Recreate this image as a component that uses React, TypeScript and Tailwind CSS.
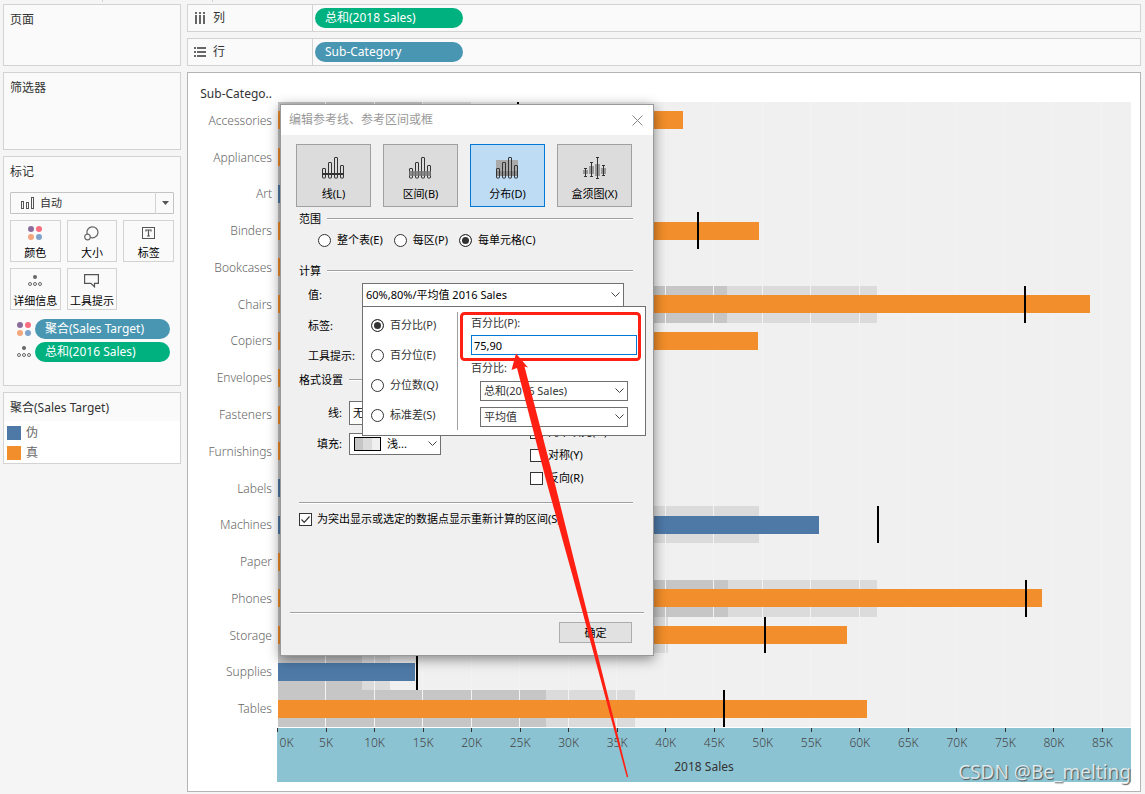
import React from 'react';

const MAX_K = 88;

interface Row {
  name: string;
  sales: number;
  target: number;
  met: boolean;
}

const rows: Row[] = [
  { name: 'Accessories', sales: 41.8, target: 24.9, met: true },
  { name: 'Appliances', sales: 30.2, target: 24, met: true },
  { name: 'Art', sales: 6.2, target: 8, met: false },
  { name: 'Binders', sales: 49.65, target: 43.4, met: true },
  { name: 'Bookcases', sales: 30, target: 26, met: true },
  { name: 'Chairs', sales: 83.8, target: 77.2, met: true },
  { name: 'Copiers', sales: 49.55, target: 30, met: true },
  { name: 'Envelopes', sales: 4.7, target: 4, met: true },
  { name: 'Fasteners', sales: 1.5, target: 1, met: true },
  { name: 'Furnishings', sales: 27.8, target: 21, met: true },
  { name: 'Labels', sales: 2.8, target: 3, met: false },
  { name: 'Machines', sales: 55.85, target: 62, met: false },
  { name: 'Paper', sales: 27.7, target: 20, met: true },
  { name: 'Phones', sales: 78.85, target: 77.3, met: true },
  { name: 'Storage', sales: 58.7, target: 50.3, met: true },
  { name: 'Supplies', sales: 14.15, target: 14.4, met: false },
  { name: 'Tables', sales: 60.8, target: 46.1, met: true },
];

const ticks = Array.from({ length: 18 }, (_, i) => i * 5);

const pct = (k: number) => `${(k / MAX_K) * 100}%`;

/* ---------- icons ---------- */

const ColorDots = () => (
  <svg width="14" height="14" viewBox="0 0 14 14">
    <circle cx="3" cy="3" r="3" fill="#8a6d9b" />
    <circle cx="11" cy="3" r="3" fill="#fa6e80" />
    <circle cx="3" cy="11" r="3" fill="#f4a77c" />
    <circle cx="11" cy="11" r="3" fill="#7fa3ca" />
  </svg>
);

const DetailDots = () => (
  <svg width="14" height="12" viewBox="0 0 14 12" fill="none" stroke="#666">
    <circle cx="7" cy="2" r="2" fill="#666" stroke="none" />
    <circle cx="2" cy="9" r="1.5" />
    <circle cx="7" cy="9" r="1.5" />
    <circle cx="12" cy="9" r="1.5" />
  </svg>
);

const SizeIcon = () => (
  <svg width="15" height="15" viewBox="0 0 15 15" fill="none" stroke="#666" strokeWidth="1.2">
    <path d="M3.3 8.2A5.5 5.5 0 1 1 6.4 11.4" />
    <circle cx="3.5" cy="11" r="2.8" />
  </svg>
);

const LabelIcon = () => (
  <svg width="14" height="12" viewBox="0 0 14 12" fill="none" stroke="#555">
    <rect x="0.5" y="0.5" width="12" height="11" />
    <path d="M4 4.5V3h5v1.5M6.5 3v6M5 9h3" strokeWidth="1.2" />
  </svg>
);

const TooltipIcon = () => (
  <svg width="15" height="14" viewBox="0 0 15 14" fill="none" stroke="#555" strokeWidth="1.2">
    <path d="M0.6 0.6h13.8v8.8h-3.9v3.4l-3.6-3.4H0.6z" />
  </svg>
);

const Chevron = () => (
  <svg className="pointer-events-none absolute right-1 top-1/2 -translate-y-1/2" width="9" height="6" viewBox="0 0 9 6" fill="none" stroke="#444">
    <path d="M0.5 0.5l4 4 4-4" />
  </svg>
);

const BARS = [
  { x: 0, y: 11 },
  { x: 6, y: 5 },
  { x: 12, y: 0 },
  { x: 18, y: 8 },
];

function RefIcon({ kind }: { kind: string }) {
  if (kind === 'box') {
    const boxes = [
      { x: 2.5, top: 11, bottom: 19, b1: 13, b2: 17 },
      { x: 8.5, top: 5, bottom: 19, b1: 9, b2: 17 },
      { x: 14.5, top: 0, bottom: 21, b1: 7, b2: 19 },
      { x: 20.5, top: 8, bottom: 18, b1: 11, b2: 17 },
    ];
    return (
      <svg width="24" height="22" viewBox="0 0 24 22">
        {boxes.map((b) => (
          <g key={b.x}>
            <rect x={b.x - 2.5} y={b.b1} width="5" height={b.b2 - b.b1} fill="#999" />
            <path d={`M${b.x} ${b.top}V${b.bottom + 0.5}M${b.x - 1.5} ${b.top + 0.5}h3M${b.x - 1.5} ${b.bottom + 0.5}h3`} stroke="#333" fill="none" />
          </g>
        ))}
      </svg>
    );
  }
  return (
    <svg width="23" height="22" viewBox="0 0 23 22">
      {kind === 'dist' && <rect x="0" y="3" width="22" height="11" fill="#aaa" />}
      {kind === 'dist' && <rect x="0" y="14" width="22" height="5" fill="#8c8c8c" />}
      {BARS.map((b) => (
        <rect key={b.x} x={b.x + 0.5} y={b.y + 0.5} width="3" height={20.5 - b.y} rx="0.5" fill="none" stroke="#333" />
      ))}
      {kind === 'line' && <rect x="0" y="16" width="22" height="2" fill="#333" />}
      {kind === 'band' && <rect x="0" y="14" width="22" height="5" fill="#777" fillOpacity="0.8" />}
    </svg>
  );
}

/* ---------- small controls ---------- */

function Pill({ color, children }: { color: 'green' | 'blue'; children: React.ReactNode }) {
  return (
    <button
      className={`h-5 w-full rounded-full pl-[10px] text-left text-[12px] leading-5 text-white ${
        color === 'green' ? 'bg-[#00b180]' : 'bg-[#4996b2]'
      }`}
    >
      {children}
    </button>
  );
}

function Radio({ name, label, checked, className = 'text-black' }: { name: string; label: string; checked?: boolean; className?: string }) {
  return (
    <label className={`flex h-4 items-center gap-[6px] ${className}`}>
      <input
        type="radio"
        name={name}
        defaultChecked={checked}
        className="size-[13px] appearance-none rounded-full border border-[#333] bg-white checked:bg-[#333] checked:shadow-[inset_0_0_0_2px_#fff]"
      />
      {label}
    </label>
  );
}

function Check({ label, checked }: { label: string; checked?: boolean }) {
  return (
    <label className="flex h-4 items-center gap-[5px] whitespace-nowrap">
      <span className="relative flex size-[13px] shrink-0">
        <input type="checkbox" defaultChecked={checked} className="peer size-[13px] appearance-none border border-[#333] bg-white" />
        <svg className="pointer-events-none absolute inset-0 hidden peer-checked:block" width="13" height="13" viewBox="0 0 13 13" fill="none" stroke="#333" strokeWidth="1.2">
          <path d="M2.5 6.5l2.7 2.8 5.3-5.8" />
        </svg>
      </span>
      {label}
    </label>
  );
}

function Select({ label, value, id, className = '', color = 'text-black', pad = 'pl-[3px]' }: { label?: string; value: string; id: string; className?: string; color?: string; pad?: string }) {
  return (
    <div className={`relative ${className}`}>
      <select id={id} aria-label={label} className={`size-full appearance-none border border-[#707070] bg-white ${pad} ${color}`}>
        <option>{value}</option>
      </select>
      <Chevron />
    </div>
  );
}

const Rule = ({ className = '' }: { className?: string }) => <div className={`h-[2px] border-t border-[#a0a0a0] bg-white ${className}`} />;

function SectionTitle({ children, className }: { children: React.ReactNode; className: string }) {
  return (
    <div className={`ml-[3px] mr-[5px] flex h-4 items-center gap-[6px] ${className}`}>
      <span>{children}</span>
      <Rule className="flex-1" />
    </div>
  );
}

/* ---------- left side ---------- */

const markButtons = [
  { label: '颜色', icon: <ColorDots /> },
  { label: '大小', icon: <SizeIcon /> },
  { label: '标签', icon: <LabelIcon /> },
  { label: '详细信息', icon: <DetailDots /> },
  { label: '工具提示', icon: <TooltipIcon /> },
];

function Sidebar() {
  return (
    <aside className="flex w-[178px] shrink-0 flex-col gap-[6px] text-[12px] leading-4 text-[#333]">
      <section className="h-[62px] border border-[#d3d3d3] bg-[#fafafa] px-[6px] py-[7px]">页面</section>
      <section className="h-[78px] border border-[#d3d3d3] bg-[#fafafa] px-[6px] py-[7px]">筛选器</section>
      <section className="h-[230px] border border-[#d3d3d3] bg-[#fafafa] px-[6px] py-[7px]">
        <h2>标记</h2>
        <div className="relative mt-3 h-[22px]">
          <svg className="absolute left-[11px] top-[5px]" width="14" height="12" viewBox="0 0 14 12" fill="none" stroke="#555">
            <rect x="0.5" y="4.5" width="2" height="7" />
            <rect x="5.5" y="5.5" width="2" height="6" />
            <rect x="10.5" y="0.5" width="2" height="11" />
          </svg>
          <select aria-label="标记类型" className="size-full appearance-none rounded-[1px] border border-[#c4c4c4] pl-[29px] text-[11px]">
            <option>自动</option>
          </select>
          <div className="pointer-events-none absolute inset-y-0 right-0 flex w-[19px] items-center justify-center border-l border-[#d3d3d3]">
            <svg width="7" height="4" viewBox="0 0 7 4" fill="#555">
              <path d="M0 0h7L3.5 4z" />
            </svg>
          </div>
        </div>
        <div className="mt-[6px] grid grid-cols-3 gap-[6px] text-[11px] text-black">
          {markButtons.map((b) => (
            <button key={b.label} className="flex h-[42px] flex-col items-center whitespace-nowrap border border-[#d3d3d3] pt-1">
              <span className="flex h-4 items-center">{b.icon}</span>
              <span className="mt-1">{b.label}</span>
            </button>
          ))}
        </div>
        <div className="mt-[9px] flex flex-col gap-[3px] pl-[7px] pr-1">
          <div className="flex items-center gap-1">
            <span className="shrink-0">
              <ColorDots />
            </span>
            <Pill color="blue">聚合(Sales Target)</Pill>
          </div>
          <div className="flex items-center gap-1">
            <span className="shrink-0">
              <DetailDots />
            </span>
            <Pill color="green">总和(2016 Sales)</Pill>
          </div>
        </div>
      </section>
      <section className="h-[72px] border border-[#d3d3d3] bg-white">
        <h2 className="h-7 bg-[#fafafa] pl-[6px] pt-[7px]">聚合(Sales Target)</h2>
        <ul className="flex flex-col gap-1 pl-[3px] pt-1 text-[#666]">
          <li className="flex h-4 items-center gap-[5px]">
            <span className="size-[14px] bg-[#4e79a7]" />伪
          </li>
          <li className="flex h-4 items-center gap-[5px]">
            <span className="size-[14px] bg-[#f28e2b]" />真
          </li>
        </ul>
      </section>
    </aside>
  );
}

/* ---------- shelves + chart ---------- */

function Shelf({ label, icon, children }: { label: string; icon: React.ReactNode; children: React.ReactNode }) {
  return (
    <div className="flex h-7 items-center border border-[#d3d3d3] bg-[#fafafa] text-[12px] text-[#333]">
      <div className="flex h-full w-[125px] shrink-0 items-center gap-[6px] border-r border-[#d3d3d3] pl-[6px]">
        {icon}
        {label}
      </div>
      <div className="ml-[2px] w-[148px]">{children}</div>
    </div>
  );
}

function Chart() {
  return (
    <section className="flex min-h-0 flex-1 flex-col border border-[#b4b4b4] bg-white pb-[9px] pr-[9px] pt-[13px] text-[12px] leading-4">
      <div className="h-4 w-[84px] text-right text-[#333]">Sub-Catego..</div>
      <div className="relative flex min-h-0 flex-1 flex-col">
        {rows.map((r) => (
          <div key={r.name} className="flex min-h-0 flex-1">
            <div className="flex w-[90px] shrink-0 items-center justify-end pr-[6px] pt-px font-light text-[#666]">{r.name}</div>
            <div className="relative flex flex-1 items-center bg-[#f0f0f0]">
              <div className="absolute inset-y-0 left-0 bg-[#dbdbdb]" style={{ width: pct(r.target * 0.8) }} />
              <div className="absolute inset-y-0 left-0 bg-[#c6c6c6]" style={{ width: pct(r.target * 0.6) }} />
              {ticks.slice(1).map((t) => (
                <div key={t} className="absolute inset-y-0 -ml-px w-px bg-[#f3f3f3]" style={{ left: pct(t) }} />
              ))}
              <div className={`relative h-[18px] ${r.met ? 'bg-[#f28e2b]' : 'bg-[#4e79a7]'}`} style={{ width: pct(r.sales) }} />
              <div className="absolute inset-y-0 -ml-[2px] w-[2px] bg-black" style={{ left: pct(r.target) }} />
            </div>
          </div>
        ))}
      </div>
      <div className="ml-[89px] mt-px h-[54px] bg-[#8cc3d2] text-[#444]">
        <div className="relative h-[31px]">
          {ticks.map((t) => (
            <div key={t} className="absolute top-0 flex w-px flex-col items-center" style={{ left: pct(t) }}>
              <div className="h-1 w-px shrink-0 bg-[#333]" />
              <span className={`mt-[3px] font-light ${t === 0 ? 'pl-[18px]' : ''}`}>{t}K</span>
            </div>
          ))}
        </div>
        <div className="text-center text-[#333]">2018 Sales</div>
      </div>
    </section>
  );
}

/* ---------- dialog ---------- */

const kinds = [
  { id: 'line', label: '线(L)' },
  { id: 'band', label: '区间(B)' },
  { id: 'dist', label: '分布(D)' },
  { id: 'box', label: '盒须图(X)' },
];

function Popup() {
  return (
    <div className="absolute left-[81px] top-[201px] flex h-[130px] w-[284px] border border-[#707070] bg-white text-[#333]">
      <div className="my-[5px] flex w-[95px] flex-col gap-[14px] border-r border-[#a0a0a0] pl-2 pt-[5px]">
        <Radio name="calc" label="百分比(P)" checked className="text-[#333]" />
        <Radio name="calc" label="百分位(E)" className="text-[#333]" />
        <Radio name="calc" label="分位数(Q)" className="text-[#333]" />
        <Radio name="calc" label="标准差(S)" className="text-[#333]" />
      </div>
      <div className="flex-1 pl-[13px] pr-2 pt-2">
        <label htmlFor="percents" className="block h-4">
          百分比(P):
        </label>
        <input id="percents" defaultValue="75,90" className="mt-1 block h-5 w-full border border-[#0078d7] bg-white pl-[2px] text-black" />
        <div className="mt-[5px] h-4">百分比:</div>
        <div className="mt-[5px] flex flex-col gap-[6px] pl-[9px] pr-[9px]">
          <Select id="field" label="字段" value="总和(2016 Sales)" className="h-5" color="text-[#333]" />
          <Select id="agg" label="聚合" value="平均值" className="h-5" color="text-[#333]" />
        </div>
      </div>
    </div>
  );
}

function Dialog() {
  return (
    <div
      role="dialog"
      aria-label="编辑参考线、参考区间或框"
      className="absolute left-[280px] top-[104px] flex h-[552px] w-[374px] flex-col border border-[#999] bg-[#f0f0f0] text-[11px] leading-4 text-black shadow-[0_3px_12px_rgba(0,0,0,0.45)]"
    >
      <header className="flex h-[30px] items-center justify-between bg-white pl-2 pr-[10px] text-[12px] text-[#999]">
        编辑参考线、参考区间或框
        <button aria-label="关闭">
          <svg width="11" height="11" viewBox="0 0 11 11" stroke="#888">
            <path d="M0.5 0.5l10 10M10.5 0.5l-10 10" />
          </svg>
        </button>
      </header>

      <div className="flex flex-1 flex-col px-[15px] pt-[9px]">
        <div className="flex gap-3">
          {kinds.map((k) => (
            <button
              key={k.id}
              className={`flex h-[63px] w-[75px] flex-col items-center border pt-[12px] ${
                k.id === 'dist' ? 'border-[#0078d7] bg-[#bfdcf5]' : 'border-[#a0a0a0] bg-[#dcdcdc]'
              }`}
            >
              <RefIcon kind={k.id} />
              <span className="mt-[7px]">{k.label}</span>
            </button>
          ))}
        </div>

        <SectionTitle className="mt-1">范围</SectionTitle>
        <div className="mt-[5px] flex gap-[11px] pl-[22px]">
          <Radio name="scope" label="整个表(E)" />
          <Radio name="scope" label="每区(P)" />
          <Radio name="scope" label="每单元格(C)" checked />
        </div>

        <SectionTitle className="mt-[15px]">计算</SectionTitle>
        <div className="mt-1 flex items-center pl-3">
          <label htmlFor="value" className="w-[54px]">
            值:
          </label>
          <Select id="value" value="60%,80%/平均值 2016 Sales" className="h-6 w-[262px]" />
        </div>
        <div className="mt-[11px] h-4 pl-3">标签:</div>
        <div className="mt-[14px] h-4 pl-3">工具提示:</div>

        <SectionTitle className="mt-2">格式设置</SectionTitle>
        <div className="mt-[13px] flex">
          <div className="grid w-[234px] grid-cols-[46px_92px] content-start gap-x-[7px] gap-y-2">
            <label htmlFor="line" className="self-center text-right">
              线:
            </label>
            <Select id="line" value="无" className="h-6" />
            <label htmlFor="fill" className="self-center text-right">
              填充:
            </label>
            <div className="relative h-[22px]">
              <Select id="fill" value="浅..." className="h-full" pad="pl-[37px]" />
              <div className="pointer-events-none absolute left-[5px] top-1 flex h-[14px] w-[27px] border border-black">
                <div className="flex-1 bg-[#c6c6c6]" />
                <div className="flex-1 bg-[#dbdbdb]" />
                <div className="flex-1 bg-[#f0f0f0]" />
              </div>
            </div>
          </div>
          <div className="flex flex-col gap-[7px] pt-[23px]">
            <Check label="向下填充(O)" />
            <Check label="对称(Y)" />
            <Check label="反向(R)" />
          </div>
        </div>

        <Rule className="ml-[3px] mr-[5px] mt-4" />
        <div className="mt-[7px] pl-[3px]">
          <Check checked label="为突出显示或选定的数据点显示重新计算的区间(S)" />
        </div>
      </div>

      <footer className="px-[9px] pb-3">
        <Rule />
        <div className="flex justify-end pr-3 pt-2">
          <button className="h-[21px] w-[73px] border border-[#adadad] bg-[#e1e1e1]">确定</button>
        </div>
      </footer>

      <Popup />
    </div>
  );
}

// Red frame and arrow drawn on top of the percent field
function Annotation() {
  return (
    <svg className="pointer-events-none absolute left-[455px] top-[305px]" width="180" height="480" viewBox="455 305 180 480" overflow="visible">
      <rect x="461.5" y="313.5" width="178" height="46" rx="3" fill="none" stroke="#ff2013" strokeWidth="3" />
      <path d="M516 353.5L528 367.5L524.5 366.5L554 480L586.5 610L628.2 777L626.8 777.3L582 610L546 480L517 368L511.5 370Z" fill="#ff2013" />
    </svg>
  );
}

export default function App() {
  return (
    <div className="relative flex h-screen min-h-[640px] flex-col bg-[#f5f5f5] pb-[2px] [font-family:'Noto_Sans','Noto_Sans_CJK_SC',sans-serif]">
      <div className="flex h-[2px] shrink-0">
        <div className="w-[103px] border-r border-[#d3d3d3]" />
        <div className="w-[110px] border-r border-[#d3d3d3]" />
      </div>
      <div className="flex min-h-0 flex-1 gap-[6px] pl-[3px] pr-1 pt-[2px]">
        <Sidebar />
        <main className="flex min-w-0 flex-1 flex-col gap-[6px]">
          <Shelf
            label="列"
            icon={
              <svg width="13" height="13" viewBox="0 0 13 13" fill="#666">
                <path d="M1 0h2v2H1zM5 0h2v2H5zM9 0h2v2H9zM1 3h2v9H1zM5 3h2v9H5zM9 3h2v9H9z" />
              </svg>
            }
          >
            <Pill color="green">总和(2018 Sales)</Pill>
          </Shelf>
          <Shelf
            label="行"
            icon={
              <svg width="13" height="13" viewBox="0 0 13 13" fill="#666">
                <path d="M0 1h2v2H0zM0 5h2v2H0zM0 9h2v2H0zM3 1h9v2H3zM3 5h9v2H3zM3 9h9v2H3z" />
              </svg>
            }
          >
            <Pill color="blue">Sub-Category</Pill>
          </Shelf>
          <Chart />
        </main>
      </div>
      <Dialog />
      <Annotation />
      <div className="absolute bottom-2 right-[14px] text-[19px] leading-7 text-white/75 [text-shadow:1px_1px_1px_rgba(60,60,60,0.8)]">CSDN @Be_melting</div>
    </div>
  );
}
